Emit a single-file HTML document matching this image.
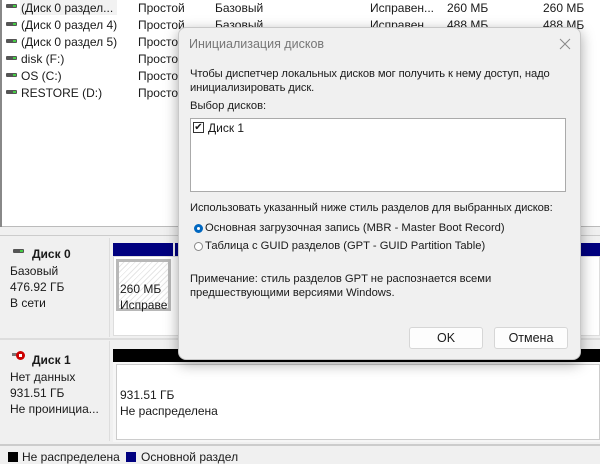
<!DOCTYPE html>
<html><head><meta charset="utf-8"><style>
*{margin:0;padding:0;box-sizing:border-box}
body{width:600px;height:462px;overflow:hidden;background:#f0f0f0;font-family:"Liberation Sans",sans-serif;font-size:12px;color:#1a1a1a;position:relative}
.a{position:absolute;white-space:nowrap}
.ico{position:absolute;width:11px;height:4px;background:#555;border-radius:1px}
.ico:after{content:"";position:absolute;right:1px;top:1px;width:3px;height:2px;background:#4c4}
.dlg{position:absolute;left:178px;top:27px;width:403px;height:333px;background:#f0f0f0;border:1px solid #c8c8c8;border-radius:8px;box-shadow:0 4px 14px rgba(0,0,0,.35)}
.dlg .t{font-size:11.2px}
.btn{position:absolute;width:74px;height:22px;background:#fdfdfd;border:1px solid #d6d6d6;border-radius:3px;text-align:center;line-height:20px;font-size:12.5px}
</style></head><body>
<div class="a" style="left:0;top:0;width:600px;height:227px;background:#fff;border-bottom:1px solid #bbb"></div>
<div class="a" style="left:0;top:0;width:2px;height:227px;background:#888"></div>
<div class="a" style="left:20px;top:0;width:97px;height:15px;background:#f2f2f2"></div>
<div class="ico" style="left:6px;top:4px"></div><div class="a" style="left:21px;top:1px">(Диск 0 раздел...</div>
<div class="ico" style="left:6px;top:22px"></div><div class="a" style="left:21px;top:18px">(Диск 0 раздел 4)</div>
<div class="ico" style="left:6px;top:39px"></div><div class="a" style="left:21px;top:35px">(Диск 0 раздел 5)</div>
<div class="ico" style="left:6px;top:56px"></div><div class="a" style="left:21px;top:52px">disk (F:)</div>
<div class="ico" style="left:6px;top:73px"></div><div class="a" style="left:21px;top:69px">OS (C:)</div>
<div class="ico" style="left:6px;top:90px"></div><div class="a" style="left:21px;top:86px">RESTORE (D:)</div>
<div class="a" style="left:138px;top:1px">Простой</div><div class="a" style="left:138px;top:18px">Простой</div>
<div class="a" style="left:138px;top:35px">Простой</div><div class="a" style="left:138px;top:52px">Простой</div>
<div class="a" style="left:138px;top:69px">Простой</div><div class="a" style="left:138px;top:86px">Простой</div>
<div class="a" style="left:215px;top:1px">Базовый</div><div class="a" style="left:215px;top:18px">Базовый</div>
<div class="a" style="left:370px;top:1px">Исправен...</div><div class="a" style="left:447px;top:1px">260 МБ</div><div class="a" style="left:543px;top:1px">260 МБ</div>
<div class="a" style="left:370px;top:18px">Исправен...</div><div class="a" style="left:447px;top:18px">488 МБ</div><div class="a" style="left:543px;top:18px">488 МБ</div>

<div class="a" style="left:0;top:235px;width:600px;height:1px;background:#ccc"></div>
<div class="a" style="left:2px;top:238px;width:108px;height:99px;background:#f0f0f0;border-right:1px solid #ddd"></div>
<div class="ico" style="left:13px;top:249px"></div>
<div class="a" style="left:32px;top:247px;font-weight:bold">Диск 0</div>
<div class="a" style="left:10px;top:264px">Базовый</div>
<div class="a" style="left:10px;top:280px">476.92 ГБ</div>
<div class="a" style="left:10px;top:296px">В сети</div>
<div class="a" style="left:113px;top:243px;width:60px;height:13px;background:#00007f"></div>
<div class="a" style="left:175px;top:243px;width:425px;height:13px;background:#00007f"></div>
<div class="a" style="left:113px;top:256px;width:487px;height:80px;background:#fff;border:1px solid #ddd"></div>
<div class="a" style="left:116px;top:259px;width:55px;height:52px;border:3px solid #b8b8b8;background:repeating-linear-gradient(135deg,#fff 0 3px,#e6e6e6 3px 4px)"></div>
<div class="a" style="left:120px;top:282px">260 МБ</div>
<div class="a" style="left:120px;top:298px;width:48px;overflow:hidden">Исправен</div>
<div class="a" style="left:0;top:338px;width:600px;height:2px;background:#ddd"></div>
<div class="a" style="left:2px;top:341px;width:108px;height:100px;border-right:1px solid #ddd"></div>
<div class="a" style="left:12px;top:353px;width:5px;height:3px;background:#777"></div>
<div class="a" style="left:16px;top:351px;width:9px;height:9px;border-radius:50%;background:#c00"></div>
<div class="a" style="left:19px;top:354px;width:3px;height:3px;background:#fff"></div>
<div class="a" style="left:32px;top:353px;font-weight:bold">Диск 1</div>
<div class="a" style="left:10px;top:370px">Нет данных</div>
<div class="a" style="left:10px;top:386px">931.51 ГБ</div>
<div class="a" style="left:10px;top:402px">Не проинициа...</div>
<div class="a" style="left:113px;top:349px;width:487px;height:13px;background:#000"></div>
<div class="a" style="left:113px;top:362px;width:487px;height:80px;background:#f6f6f6"></div>
<div class="a" style="left:116px;top:364px;width:484px;height:76px;background:#fff;border:1px solid #ccc"></div>
<div class="a" style="left:120px;top:388px">931.51 ГБ</div>
<div class="a" style="left:120px;top:404px">Не распределена</div>
<div class="a" style="left:0;top:444px;width:600px;height:2px;background:#ccc"></div>
<div class="a" style="left:8px;top:452px;width:10px;height:10px;background:#000"></div>
<div class="a" style="left:22px;top:450px">Не распределена</div>
<div class="a" style="left:126px;top:452px;width:10px;height:10px;background:#00007f"></div>
<div class="a" style="left:141px;top:450px">Основной раздел</div>

<div class="dlg">
<div class="a" style="left:10px;top:9px;font-size:12.5px;color:#777">Инициализация дисков</div>
<svg class="a" style="left:380px;top:10px" width="12" height="12"><path d="M1 1L11 11M11 1L1 11" stroke="#888" stroke-width="1"/></svg>
<div class="a t" style="left:11px;top:39px;line-height:14px;letter-spacing:-0.1px">Чтобы диспетчер локальных дисков мог получить к нему доступ, надо<br>инициализировать диск.</div>
<div class="a t" style="left:11px;top:72px">Выбор дисков:</div>
<div class="a" style="left:11px;top:90px;width:376px;height:74px;background:#fff;border:1px solid #aaa"></div>
<div class="a" style="left:14px;top:94px;width:11px;height:11px;border:1px solid #333;background:#fff;font-size:10px;line-height:9px;text-align:center">✔</div>
<div class="a" style="left:29px;top:93px">Диск 1</div>
<div class="a t" style="left:11px;top:174px;letter-spacing:-0.1px">Использовать указанный ниже стиль разделов для выбранных дисков:</div>
<div class="a" style="left:15px;top:196px;width:9px;height:9px;border-radius:50%;border:3px solid #0067c0;background:#fff"></div>
<div class="a t" style="left:26px;top:194px">Основная загрузочная запись (MBR - Master Boot Record)</div>
<div class="a" style="left:15px;top:214px;width:9px;height:9px;border-radius:50%;border:1px solid #888;background:#fff"></div>
<div class="a t" style="left:26px;top:212px">Таблица с GUID разделов (GPT - GUID Partition Table)</div>
<div class="a t" style="left:11px;top:244px;line-height:14px">Примечание: стиль разделов GPT не распознается всеми<br>предшествующими версиями Windows.</div>
<div class="btn" style="left:230px;top:299px">OK</div>
<div class="btn" style="left:315px;top:299px">Отмена</div>
</div>
</body></html>
